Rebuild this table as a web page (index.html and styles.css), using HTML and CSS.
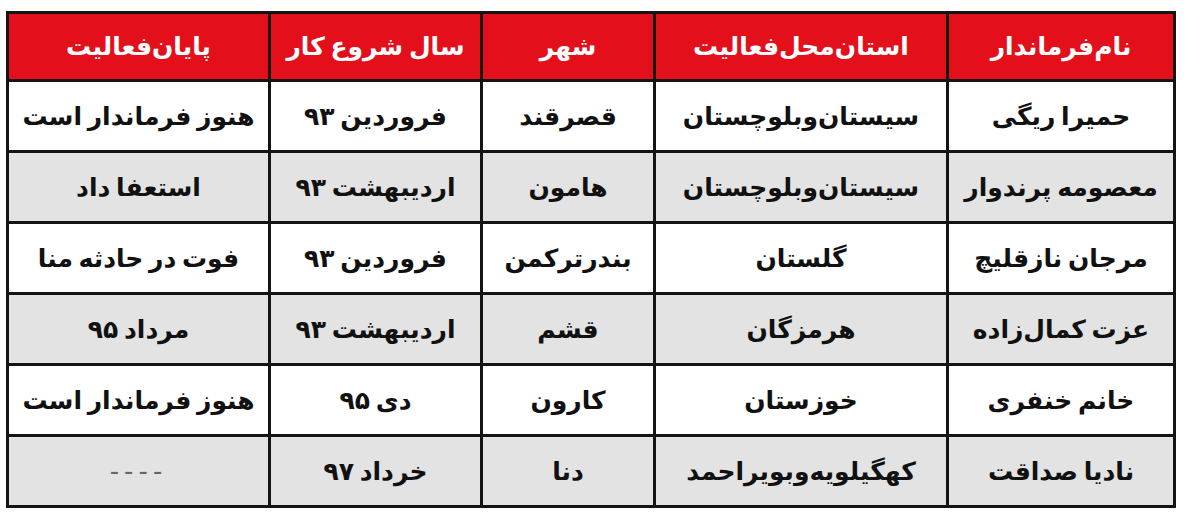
FILE: index.html
```html
<!DOCTYPE html>
<html lang="fa" dir="rtl">
<head>
<meta charset="utf-8">
<link rel="stylesheet" href="styles.css">
</head>
<body>
<div class="wrap">
<table class="governors">
  <colgroup>
    <col class="c-name">
    <col class="c-prov">
    <col class="c-city">
    <col class="c-start">
    <col class="c-end">
  </colgroup>
  <thead>
    <tr>
      <th>نام‌فرماندار</th>
      <th>استان‌محل‌فعالیت</th>
      <th>شهر</th>
      <th>سال شروع کار</th>
      <th>پایان‌فعالیت</th>
    </tr>
  </thead>
  <tbody>
    <tr>
      <td>حمیرا ریگی</td>
      <td>سیستان‌وبلوچستان</td>
      <td>قصرقند</td>
      <td>فروردین ۹۳</td>
      <td>هنوز فرماندار است</td>
    </tr>
    <tr class="alt">
      <td>معصومه پرندوار</td>
      <td>سیستان‌وبلوچستان</td>
      <td>هامون</td>
      <td>اردیبهشت ۹۳</td>
      <td>استعفا داد</td>
    </tr>
    <tr>
      <td>مرجان نازقلیچ</td>
      <td>گلستان</td>
      <td>بندرترکمن</td>
      <td>فروردین ۹۳</td>
      <td>فوت در حادثه منا</td>
    </tr>
    <tr class="alt">
      <td>عزت کمال‌زاده</td>
      <td>هرمزگان</td>
      <td>قشم</td>
      <td>اردیبهشت ۹۳</td>
      <td>مرداد ۹۵</td>
    </tr>
    <tr>
      <td>خانم خنفری</td>
      <td>خوزستان</td>
      <td>کارون</td>
      <td>دی ۹۵</td>
      <td>هنوز فرماندار است</td>
    </tr>
    <tr class="alt">
      <td>نادیا صداقت</td>
      <td>کهگیلویه‌وبویراحمد</td>
      <td>دنا</td>
      <td>خرداد ۹۷</td>
      <td class="dash">----</td>
    </tr>
  </tbody>
</table>
</div>
</body>
</html>
```

FILE: styles.css
```css
html, body {
  margin: 0;
  padding: 0;
  background: #ffffff;
}

.wrap {
  padding: 11px 24px 0 9px;
}

.governors {
  border-collapse: collapse;
  width: 1167px;
  table-layout: fixed;
  font-family: "DejaVu Sans", sans-serif;
  font-weight: bold;
  color: #111111;
  border: 3px solid #141414;
}

.c-name { width: 227px; }
.c-prov { width: 293px; }
.c-city { width: 173px; }
.c-start { width: 212px; }
.c-end { width: 262px; }

.governors th,
.governors td {
  border: 3px solid #141414;
  text-align: center;
  vertical-align: middle;
  padding: 0;
  word-spacing: -3px;
  white-space: nowrap;
}

.governors th {
  background: #e3101c;
  color: #ffffff;
  height: 65px;
  font-size: 25px;
}

.governors td {
  background: #ffffff;
  height: 68px;
  font-size: 25px;
}

.governors tr.alt td {
  background: #e3e3e3;
}

.governors td.dash {
  color: #666666;
  font-weight: normal;
  font-size: 26px;
  letter-spacing: 5px;
}
```
